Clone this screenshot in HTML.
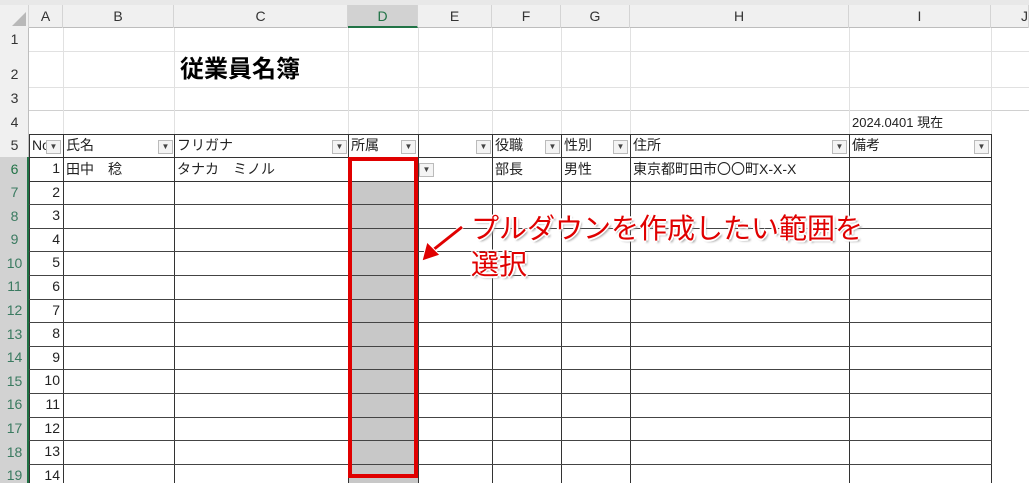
<!DOCTYPE html>
<html><head><meta charset="utf-8"><style>
*{margin:0;padding:0;box-sizing:border-box}
body{width:1029px;height:483px;overflow:hidden;background:#fff;position:relative;font-family:"Liberation Sans","Noto Sans CJK JP",sans-serif;font-size:13px;color:#222}
div{position:absolute}
.t{white-space:nowrap;line-height:23px}
.dd{width:15px;height:14px;border:1px solid #bbb;background:#f4f4f4;font-size:8px;line-height:12px;text-align:center;color:#444}
.ch{top:5px;height:23px;line-height:23px;text-align:center;font-size:14px;color:#333;border-right:1px solid #d4d4d4}
.rh{left:0;width:29px;text-align:center;font-size:14px;color:#333}
</style></head><body>
<div style="left:0;top:0;width:1029px;height:5px;background:#e8e8e8"></div>
<div style="left:0;top:5px;width:1029px;height:23px;background:#f0f0f0;border-bottom:1px solid #bdbdbd"></div>
<div style="left:0;top:5px;width:29px;height:23px;background:#f0f0f0;border-right:1px solid #d4d4d4"></div>
<svg style="position:absolute;left:8px;top:12px" width="18" height="14"><polygon points="18,0 18,14 4,14" fill="#b8b8b8"/></svg>
<div class="ch" style="left:29px;width:34px">A</div>
<div class="ch" style="left:63px;width:111px">B</div>
<div class="ch" style="left:174px;width:174px">C</div>
<div class="ch" style="left:348px;width:70px;background:#d2d2d2;border-bottom:2px solid #217346;color:#217346">D</div>
<div class="ch" style="left:418px;width:74px">E</div>
<div class="ch" style="left:492px;width:69px">F</div>
<div class="ch" style="left:561px;width:69px">G</div>
<div class="ch" style="left:630px;width:219px">H</div>
<div class="ch" style="left:849px;width:142px">I</div>
<div class="ch" style="left:991px;width:38px;text-align:left;padding-left:30px">J</div>
<div style="left:0;top:28px;width:29px;height:455px;background:#f0f0f0;border-right:1px solid #bdbdbd"></div>
<div style="left:0;top:157px;width:29px;height:326px;background:#d2d2d2;border-right:2px solid #217346"></div>
<div style="left:29px;top:28px;width:1000px;height:106px;background:
linear-gradient(#e1e1e1,#e1e1e1) 0 23px/100% 1px no-repeat,
linear-gradient(#e1e1e1,#e1e1e1) 0 59px/100% 1px no-repeat,
linear-gradient(#d0d0d0,#d0d0d0) 0 82px/100% 1px no-repeat"></div>
<div style="left:29px;top:28px;width:1000px;height:455px;background:
linear-gradient(#e1e1e1,#e1e1e1) 34px 0/1px 106px no-repeat,
linear-gradient(#e1e1e1,#e1e1e1) 145px 0/1px 106px no-repeat,
linear-gradient(#e1e1e1,#e1e1e1) 319px 0/1px 106px no-repeat,
linear-gradient(#e1e1e1,#e1e1e1) 389px 0/1px 106px no-repeat,
linear-gradient(#e1e1e1,#e1e1e1) 463px 0/1px 106px no-repeat,
linear-gradient(#e1e1e1,#e1e1e1) 532px 0/1px 106px no-repeat,
linear-gradient(#e1e1e1,#e1e1e1) 601px 0/1px 106px no-repeat,
linear-gradient(#e1e1e1,#e1e1e1) 820px 0/1px 106px no-repeat,
linear-gradient(#e1e1e1,#e1e1e1) 962px 0/1px 455px no-repeat"></div>
<div style="left:349px;top:181px;width:69px;height:302px;background:#c8c8c8"></div>
<div style="left:29px;top:134px;width:963px;height:349px;background:
linear-gradient(#333,#333) 0 0/100% 1px no-repeat,
linear-gradient(#333,#333) 0 23px/100% 1px no-repeat,
linear-gradient(#333,#333) 0 47px/100% 1px no-repeat,
linear-gradient(#444,#444) 0 70px/100% 1px no-repeat,
linear-gradient(#444,#444) 0 94px/100% 1px no-repeat,
linear-gradient(#444,#444) 0 117px/100% 1px no-repeat,
linear-gradient(#444,#444) 0 141px/100% 1px no-repeat,
linear-gradient(#444,#444) 0 165px/100% 1px no-repeat,
linear-gradient(#444,#444) 0 188px/100% 1px no-repeat,
linear-gradient(#444,#444) 0 212px/100% 1px no-repeat,
linear-gradient(#444,#444) 0 235px/100% 1px no-repeat,
linear-gradient(#444,#444) 0 259px/100% 1px no-repeat,
linear-gradient(#444,#444) 0 283px/100% 1px no-repeat,
linear-gradient(#444,#444) 0 306px/100% 1px no-repeat,
linear-gradient(#444,#444) 0 330px/100% 1px no-repeat,
linear-gradient(#333,#333) 0 0/1px 100% no-repeat,
linear-gradient(#333,#333) 34px 0/1px 100% no-repeat,
linear-gradient(#333,#333) 145px 0/1px 100% no-repeat,
linear-gradient(#333,#333) 319px 0/1px 100% no-repeat,
linear-gradient(#333,#333) 389px 0/1px 100% no-repeat,
linear-gradient(#333,#333) 463px 0/1px 100% no-repeat,
linear-gradient(#333,#333) 532px 0/1px 100% no-repeat,
linear-gradient(#333,#333) 601px 0/1px 100% no-repeat,
linear-gradient(#333,#333) 820px 0/1px 100% no-repeat,
linear-gradient(#333,#333) 962px 0/1px 100% no-repeat"></div>
<div class="rh" style="top:28px;line-height:23px">1</div>
<div class="rh" style="top:51px;line-height:46px">2</div>
<div class="rh" style="top:87px;line-height:23px">3</div>
<div class="rh" style="top:110px;line-height:24px">4</div>
<div class="rh" style="top:134px;line-height:23px">5</div>
<div class="rh" style="top:157px;line-height:24px;color:#217346">6</div>
<div style="left:0;top:181px;width:29px;color:#3a7a60;font-size:14px;text-align:center;line-height:23.6px">7<br>8<br>9<br>10<br>11<br>12<br>13<br>14<br>15<br>16<br>17<br>18<br>19</div>
<div style="left:29px;top:157px;width:31px;color:#222;font-size:14px;text-align:right;line-height:23.6px">1<br>2<br>3<br>4<br>5<br>6<br>7<br>8<br>9<br>10<br>11<br>12<br>13<br>14</div>
<div class="t" style="left:180px;top:55px;font-size:24px;font-weight:bold;color:#000;line-height:30px">従業員名簿</div>
<div class="t" style="left:852px;top:111px;font-size:13px">2024.0401 現在</div>
<div class="t" style="left:32px;top:134px;font-size:14px">No</div>
<div class="t" style="left:66px;top:134px;font-size:14px">氏名</div>
<div class="t" style="left:177px;top:134px;font-size:14px">フリガナ</div>
<div class="t" style="left:351px;top:134px;font-size:14px">所属</div>
<div class="t" style="left:495px;top:134px;font-size:14px">役職</div>
<div class="t" style="left:564px;top:134px;font-size:14px">性別</div>
<div class="t" style="left:633px;top:134px;font-size:14px">住所</div>
<div class="t" style="left:852px;top:134px;font-size:14px">備考</div>
<div class="dd" style="left:46px;top:140px">▼</div>
<div class="dd" style="left:158px;top:140px">▼</div>
<div class="dd" style="left:332px;top:140px">▼</div>
<div class="dd" style="left:401px;top:140px">▼</div>
<div class="dd" style="left:476px;top:140px">▼</div>
<div class="dd" style="left:545px;top:140px">▼</div>
<div class="dd" style="left:613px;top:140px">▼</div>
<div class="dd" style="left:832px;top:140px">▼</div>
<div class="dd" style="left:974px;top:140px">▼</div>
<div class="dd" style="left:419px;top:163px">▼</div>
<div class="t" style="left:66px;top:158px;font-size:14px">田中　稔</div>
<div class="t" style="left:177px;top:158px;font-size:14px">タナカ　ミノル</div>
<div class="t" style="left:495px;top:158px;font-size:14px">部長</div>
<div class="t" style="left:564px;top:158px;font-size:14px">男性</div>
<div class="t" style="left:633px;top:158px;font-size:14px">東京都町田市〇〇町X-X-X</div>
<div style="left:348px;top:157px;width:70px;height:321px;border:4px solid #e00000"></div>
<svg style="position:absolute;left:415px;top:222px" width="55" height="45"><line x1="47" y1="5" x2="18" y2="28" stroke="#fff" stroke-width="5"/><line x1="47" y1="5" x2="18" y2="28" stroke="#e00000" stroke-width="3"/><polygon points="7,39 12,20 25,33" fill="#e00000" stroke="#fff" stroke-width="1"/></svg>
<div style="left:471px;top:211px;font-size:28px;color:#e00000;line-height:36px;text-shadow:-2px 0 #fff,2px 0 #fff,0 -2px #fff,0 2px #fff,2px 2px 2px #999;white-space:nowrap">プルダウンを作成したい範囲を<br>選択</div>
</body></html>
